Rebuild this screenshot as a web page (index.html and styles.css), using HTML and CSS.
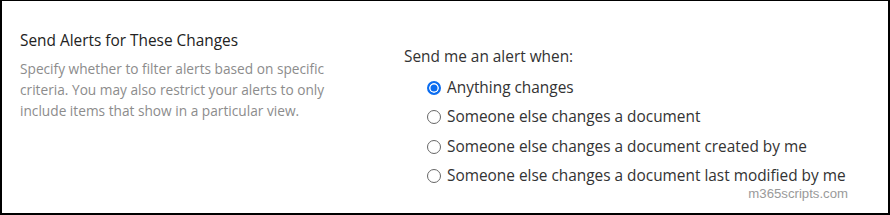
FILE: index.html
```html
<!DOCTYPE html>
<html>
<head>
  <meta charset="UTF-8">
  <title>Alert settings</title>
  <link rel="stylesheet" href="styles.css">
</head>
<body>
  <div class="panel">
    <div class="section-info">
      <div class="section-title">Send Alerts for These Changes</div>
      <div class="section-desc">Specify whether to filter alerts based on specific criteria. You may also restrict your alerts to only include items that show in a particular view.</div>
    </div>
    <div class="section-body">
      <div class="field-label">Send me an alert when:</div>
      <div class="choices">
        <label class="choice"><input type="radio" name="when" checked> Anything changes</label>
        <label class="choice"><input type="radio" name="when"> Someone else changes a document</label>
        <label class="choice"><input type="radio" name="when"> Someone else changes a document created by me</label>
        <label class="choice"><input type="radio" name="when"> Someone else changes a document last modified by me</label>
      </div>
    </div>
    <div class="watermark">m365scripts.com</div>
  </div>
</body>
</html>
```

FILE: styles.css
```css
html, body { margin: 0; padding: 0; background: #fff; }
body { font-family: "Open Sans", "Noto Sans", sans-serif; color: #333; }
.panel { position: relative; box-sizing: border-box; width: 890px; height: 215px; border: 2px solid #000; border-top-width: 1px; display: grid; grid-template-columns: 384px 1fr; padding: 30px 0 0 18px; }
.section-title { font-size: 15.4px; color: #222; line-height: 20px; }
.section-desc { margin-top: 7px; font-size: 13.7px; color: #8c8c8c; line-height: 21px; width: 340px; }
.field-label { font-size: 15.4px; color: #333; line-height: 20px; margin-top: 16px; }
.choices { display: flex; flex-direction: column; gap: 13.3px; margin: 13px 0 0 23px; }
.choice { display: flex; align-items: center; font-size: 15.4px; line-height: 16px; color: #333; }
.choice input { appearance: none; margin: 0 6px 0 0; width: 14px; height: 14px; border: 1px solid #666; border-radius: 50%; box-sizing: border-box; }
.choice input:checked { border: 2px solid #0a6cf0; background: #0a6cf0; box-shadow: inset 0 0 0 1.5px #fff; }
.watermark { position: absolute; right: 40px; bottom: 12px; font-family: "Liberation Sans", Arial, sans-serif; font-size: 13.2px; line-height: 14px; color: #9a9a9a; }
```
